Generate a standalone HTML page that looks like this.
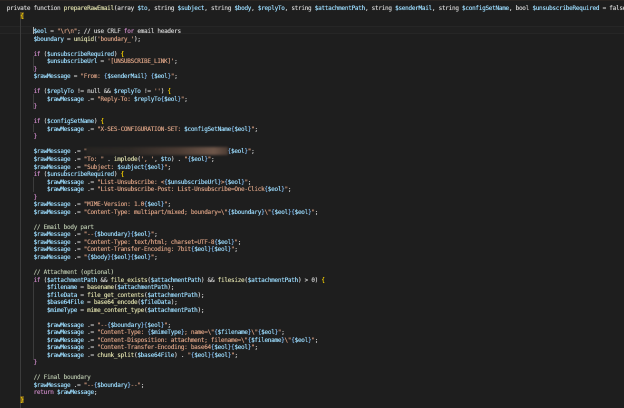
<!DOCTYPE html>
<html>
<head>
<meta charset="utf-8">
<style>
html,body{margin:0;padding:0;width:624px;height:408px;overflow:hidden;background:#1e1e1e}
.g{position:absolute;background:#3c3c3c;width:1px}
pre{position:absolute;left:6.8px;top:5.4px;margin:0;font-family:"DejaVu Sans Mono","Liberation Mono",monospace;font-size:6px;letter-spacing:-.267px;line-height:7.53px;color:#d0d0d0;white-space:pre;filter:blur(.3px);text-shadow:0 0 .4px currentColor}
.v{color:#9cdcfe}.s{color:#d8a083}.k{color:#c586c0}.b{color:#569cd6}.f{color:#dcdcaa}.c{color:#b4c0a8}.y{color:#ffd700}.p{color:#c586c0}.i{color:#7fb4e6}.t{color:#d0d0d0}
</style>
</head>
<body>
<div style="position:absolute;left:0;top:0;width:624px;height:1px;background:#2a2522"></div>
<div style="position:absolute;left:0;top:26px;width:624px;height:8px;background:#202020;border-top:1px solid #262626;border-bottom:1px solid #262626;box-sizing:border-box"></div>
<div class="g" style="left:20px;top:12px;height:396px"></div>
<div class="g" style="left:33px;top:56px;height:15px"></div>
<div class="g" style="left:33px;top:94px;height:15px"></div>
<div class="g" style="left:33px;top:124px;height:8px"></div>
<div class="g" style="left:33px;top:177px;height:15px"></div>
<div class="g" style="left:33px;top:282px;height:78px"></div>
<div style="position:absolute;left:20px;top:12px;width:3.5px;height:7px;background:#5a4a20"></div>
<div style="position:absolute;left:20px;top:395.5px;width:3.5px;height:7px;background:#6a5520"></div>
<div style="position:absolute;left:33px;top:26.5px;width:1px;height:7px;background:#aeafad"></div>
<pre><span class="t">private function</span> <span class="f">prepareRawEmail</span>(<span class="t">array</span> <span class="v">$to</span>, <span class="t">string</span> <span class="v">$subject</span>, <span class="t">string</span> <span class="v">$body</span>, <span class="v">$replyTo</span>, <span class="t">string</span> <span class="v">$attachmentPath</span>, <span class="t">string</span> <span class="v">$senderMail</span>, <span class="t">string</span> <span class="v">$configSetName</span>, <span class="t">bool</span> <span class="v">$unsubscribeRequired</span> = <span class="t">false</span>
    <span class="y">{</span>

        <span class="v">$eol</span> = <span class="s">"\r\n"</span>; // use CRLF <span class="k">for</span> email headers
        <span class="v">$boundary</span> = <span class="f">uniqid</span>(<span class="s">'boundary_'</span>);

        <span class="k">if</span> (<span class="v">$unsubscribeRequired</span>) <span class="y">{</span>
            <span class="v">$unsubscribeUrl</span> = <span class="s">'[UNSUBSCRIBE_LINK]'</span>;
        <span class="p">}</span>
        <span class="v">$rawMessage</span> = <span class="s">"From: </span><span class="i">{</span><span class="v">$senderMail</span><span class="i">}</span> <span class="i">{</span><span class="v">$eol</span><span class="i">}</span><span class="s">"</span>;

        <span class="k">if</span> (<span class="v">$replyTo</span> != null &amp;&amp; <span class="v">$replyTo</span> != <span class="s">''</span>) <span class="y">{</span>
            <span class="v">$rawMessage</span> .= <span class="s">"Reply-To: </span><span class="v">$replyTo</span><span class="i">{</span><span class="v">$eol</span><span class="i">}</span><span class="s">"</span>;
        <span class="p">}</span>

        <span class="k">if</span> (<span class="v">$configSetName</span>) <span class="y">{</span>
            <span class="v">$rawMessage</span> .= <span class="s">"X-SES-CONFIGURATION-SET: </span><span class="v">$configSetName</span><span class="i">{</span><span class="v">$eol</span><span class="i">}</span><span class="s">"</span>;
        <span class="p">}</span>

        <span class="v">$rawMessage</span> .= <span class="s">"                                          </span><span class="i">{</span><span class="v">$eol</span><span class="i">}</span><span class="s">"</span>;
        <span class="v">$rawMessage</span> .= <span class="s">"To: "</span> . <span class="f">implode</span>(<span class="s">', '</span>, <span class="v">$to</span>) . <span class="s">"</span><span class="i">{</span><span class="v">$eol</span><span class="i">}</span><span class="s">"</span>;
        <span class="v">$rawMessage</span> .= <span class="s">"Subject: </span><span class="v">$subject</span><span class="i">{</span><span class="v">$eol</span><span class="i">}</span><span class="s">"</span>;
        <span class="k">if</span> (<span class="v">$unsubscribeRequired</span>) <span class="y">{</span>
            <span class="v">$rawMessage</span> .= <span class="s">"List-Unsubscribe: &lt;</span><span class="i">{</span><span class="v">$unsubscribeUrl</span><span class="i">}</span><span class="s">&gt;</span><span class="i">{</span><span class="v">$eol</span><span class="i">}</span><span class="s">"</span>;
            <span class="v">$rawMessage</span> .= <span class="s">"List-Unsubscribe-Post: List-Unsubscribe=One-Click</span><span class="i">{</span><span class="v">$eol</span><span class="i">}</span><span class="s">"</span>;
        <span class="p">}</span>
        <span class="v">$rawMessage</span> .= <span class="s">"MIME-Version: 1.0</span><span class="i">{</span><span class="v">$eol</span><span class="i">}</span><span class="s">"</span>;
        <span class="v">$rawMessage</span> .= <span class="s">"Content-Type: multipart/mixed; boundary=\"</span><span class="i">{</span><span class="v">$boundary</span><span class="i">}</span><span class="s">\"</span><span class="i">{</span><span class="v">$eol</span><span class="i">}{</span><span class="v">$eol</span><span class="i">}</span><span class="s">"</span>;

        <span class="c">// Email body part</span>
        <span class="v">$rawMessage</span> .= <span class="s">"--</span><span class="i">{</span><span class="v">$boundary</span><span class="i">}{</span><span class="v">$eol</span><span class="i">}</span><span class="s">"</span>;
        <span class="v">$rawMessage</span> .= <span class="s">"Content-Type: text/html; charset=UTF-8</span><span class="i">{</span><span class="v">$eol</span><span class="i">}</span><span class="s">"</span>;
        <span class="v">$rawMessage</span> .= <span class="s">"Content-Transfer-Encoding: 7bit</span><span class="i">{</span><span class="v">$eol</span><span class="i">}{</span><span class="v">$eol</span><span class="i">}</span><span class="s">"</span>;
        <span class="v">$rawMessage</span> .= <span class="s">"</span><span class="i">{</span><span class="v">$body</span><span class="i">}{</span><span class="v">$eol</span><span class="i">}{</span><span class="v">$eol</span><span class="i">}</span><span class="s">"</span>;

        <span class="c">// Attachment (optional)</span>
        <span class="k">if</span> (<span class="v">$attachmentPath</span> &amp;&amp; <span class="f">file_exists</span>(<span class="v">$attachmentPath</span>) &amp;&amp; <span class="f">filesize</span>(<span class="v">$attachmentPath</span>) &gt; 0) <span class="y">{</span>
            <span class="v">$filename</span> = <span class="f">basename</span>(<span class="v">$attachmentPath</span>);
            <span class="v">$fileData</span> = <span class="f">file_get_contents</span>(<span class="v">$attachmentPath</span>);
            <span class="v">$base64File</span> = <span class="f">base64_encode</span>(<span class="v">$fileData</span>);
            <span class="v">$mimeType</span> = <span class="f">mime_content_type</span>(<span class="v">$attachmentPath</span>);

            <span class="v">$rawMessage</span> .= <span class="s">"--</span><span class="i">{</span><span class="v">$boundary</span><span class="i">}{</span><span class="v">$eol</span><span class="i">}</span><span class="s">"</span>;
            <span class="v">$rawMessage</span> .= <span class="s">"Content-Type: </span><span class="i">{</span><span class="v">$mimeType</span><span class="i">}</span><span class="s">; name=\"</span><span class="i">{</span><span class="v">$filename</span><span class="i">}</span><span class="s">\"</span><span class="i">{</span><span class="v">$eol</span><span class="i">}</span><span class="s">"</span>;
            <span class="v">$rawMessage</span> .= <span class="s">"Content-Disposition: attachment; filename=\"</span><span class="i">{</span><span class="v">$filename</span><span class="i">}</span><span class="s">\"</span><span class="i">{</span><span class="v">$eol</span><span class="i">}</span><span class="s">"</span>;
            <span class="v">$rawMessage</span> .= <span class="s">"Content-Transfer-Encoding: base64</span><span class="i">{</span><span class="v">$eol</span><span class="i">}{</span><span class="v">$eol</span><span class="i">}</span><span class="s">"</span>;
            <span class="v">$rawMessage</span> .= <span class="f">chunk_split</span>(<span class="v">$base64File</span>) . <span class="s">"</span><span class="i">{</span><span class="v">$eol</span><span class="i">}{</span><span class="v">$eol</span><span class="i">}</span><span class="s">"</span>;
        <span class="p">}</span>

        <span class="c">// Final boundary</span>
        <span class="v">$rawMessage</span> .= <span class="s">"--</span><span class="i">{</span><span class="v">$boundary</span><span class="i">}</span><span class="s">--"</span>;
        <span class="k">return</span> <span class="v">$rawMessage</span>;
    <span class="y">}</span></pre>
<div style="position:absolute;left:86px;top:147px;width:142px;height:8px;background:linear-gradient(90deg,#262422 0%,#2c2825 30%,#4a3b33 65%,#6f574a 90%,#4a3b33 100%);filter:blur(1px)"></div>
</body>
</html>
